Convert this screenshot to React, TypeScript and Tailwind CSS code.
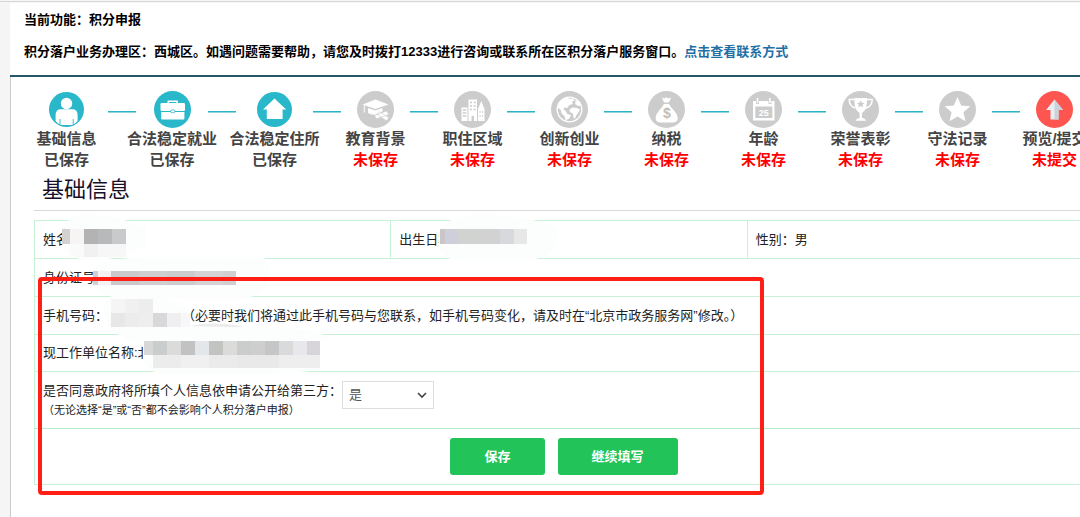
import React from "react";

type StepState = "done" | "todo" | "submit";
type Step = { label: string; status: string; state: StepState; width: string; icon: React.ReactNode };

const TEAL = "#29b8ca";
const GREY = "#cccccc";
const RED = "#ff5550";

const steps: Step[] = [
  {
    label: "基础信息",
    status: "已保存",
    state: "done",
    width: "w-[83px]",
    icon: (
      <>
        <circle cx="18.5" cy="12.5" r="5.7" fill="#fff" />
        <path d="M7.6 30V24q0-5.8 5.4-5.8h11.200q5.400 0 5.400 5.800v6q-2 2.400-5.200 4H12.800q-3.400-1.600-5.200-4z" fill="#fff" />
        <path d="M12 34v-6M25.200 34v-6" stroke={TEAL} strokeWidth=".9" fill="none" />
      </>
    ),
  },
  {
    label: "合法稳定就业",
    status: "已保存",
    state: "done",
    width: "w-[72px]",
    icon: (
      <>
        <path d="M14.300 12v-1.800h8.800V12" stroke="#fff" strokeWidth="1.500" fill="none" />
        <rect x="6.500" y="12" width="24.500" height="8" rx="1.200" fill="#fff" />
        <path d="M7.200 21h23.200v6.200q0 1.200-1.200 1.200H8.400q-1.200 0-1.200-1.200z" fill="#fff" />
        <ellipse cx="18.700" cy="20.300" rx="2.300" ry="1.500" fill="#fff" stroke={TEAL} strokeWidth=".8" />
      </>
    ),
  },
  {
    label: "合法稳定住所",
    status: "已保存",
    state: "done",
    width: "w-[77px]",
    icon: <path d="M18.500 7.500L30.200 18.500H26.600V28H10.800V18.500H7z" fill="#fff" />,
  },
  {
    label: "教育背景",
    status: "未保存",
    state: "todo",
    width: "w-[69px]",
    icon: (
      <>
        <path d="M5.500 13.500L18.500 8.500L31.500 13.500L18.500 18z" fill="#fff" />
        <path d="M11 17v5q2.500 2 7 1.800l7.500-3.600V17l-7 2.500z" fill="#fff" />
        <path d="M7.300 14v7.500" stroke="#fff" strokeWidth="1" />
        <path d="M17.500 24.500l12-4.500l2.300 3.500l-12.300 4.300zM22 20.500l10 6.200l-2.500 3l-9-6z" fill="#fff" stroke={GREY} strokeWidth=".6" />
      </>
    ),
  },
  {
    label: "职住区域",
    status: "未保存",
    state: "todo",
    width: "w-[69px]",
    icon: (
      <>
        <path d="M7.500 16.500h6V30h-6zM14.500 8.500h8.500V30h-8.500zM24 18l3.300-8l3.200 8v12H24z" fill="#fff" />
        <path d="M8.800 19h3.500M8.800 22h3.500M8.800 25h3.500M16 11.500h2M19.700 11.500h2M16 15h2M19.700 15h2M16 18.500h2M19.700 18.500h2M25.500 21h1.200M28 21h1.200M25.500 25h1.200M28 25h1.200" stroke={GREY} strokeWidth="1.500" />
        <path d="M17.500 25h2.500v5h-2.500z" fill={GREY} />
      </>
    ),
  },
  {
    label: "创新创业",
    status: "未保存",
    state: "todo",
    width: "w-[69px]",
    icon: (
      <>
        <circle cx="18.500" cy="18.500" r="12.300" fill={GREY} stroke="#fff" strokeWidth="1.300" />
        <path d="M9 11q3-4 8-4.800l1.500 1.800l3.500-.8l1.500 2l-2.500 1.800l1 2l-3.500 1l-2.500 3l-2.500-.5l-1 2l2 1.200l1.500 3l4 1.500l-1.500 3l-2.500 1.500l-1 2q-1-3.500-1.500-5.500l-3-3l-.5-3l-3-2.500q-.5-3 2-5.700z" fill="#fff" />
        <path d="M18.500 18.500l3-2l4.500.5l3 1.500l-1.500 3l-2 2.500l-1.500 3.500l-1.500-.5l-.5-4.500l-3-1.500zM24.500 9l3.500 2l1.800 4l-3-.3l-2.500-1.500z" fill="#fff" />
      </>
    ),
  },
  {
    label: "纳税",
    status: "未保存",
    state: "todo",
    width: "w-[69px]",
    icon: (
      <>
        <path d="M13.800 6.500l2.600.9l2-1.200l2.200 1.200l2.600-.9l-2.300 5.100h-4.800z" fill="#fff" />
        <path d="M16 13h5q1.500 3 5 6.500t3.800 7.200q0 4.800-5 4.800H12.600q-5 0-5-4.800q.3-3.700 3.600-7.200T16 13z" fill="#fff" />
        <text x="19" y="27" textAnchor="middle" fontSize="14" fontWeight="700" fill="#bdbdbd">$</text>
      </>
    ),
  },
  {
    label: "年龄",
    status: "未保存",
    state: "todo",
    width: "w-[69px]",
    icon: (
      <>
        <path d="M8 10h3v3h3v-3h9.500v3h3v-3h3v19.500H8zM10.300 15.500V27h17V15.500z" fill="#fff" fillRule="evenodd" />
        <path d="M12.500 7.500v4M25 7.500v4" stroke="#fff" strokeWidth="1.600" strokeLinecap="round" />
        <text x="18.800" y="24.500" textAnchor="middle" fontSize="9" fontWeight="700" fill="#fff">25</text>
      </>
    ),
  },
  {
    label: "荣誉表彰",
    status: "未保存",
    state: "todo",
    width: "w-[69px]",
    icon: (
      <>
        <path d="M12.300 7h12.800q.4 12-4.800 14.500l-.5 5.200q3.500.5 4.400 3H13.500q.9-2.500 4.300-3l-.5-5.200Q12 19 12.300 7z" fill="#fff" />
        <path d="M12.300 8.500H7.200q0 6.700 6.300 8.500M25 8.500h5.200q0 6.700-6.300 8.500" stroke="#fff" strokeWidth="1.500" fill="none" />
        <path d="M18.700 9.200l1.100 2.500l2.700.2l-2 1.800l.6 2.700l-2.400-1.400l-2.400 1.400l.6-2.700l-2-1.800l2.700-.2z" fill={GREY} />
      </>
    ),
  },
  {
    label: "守法记录",
    status: "未保存",
    state: "todo",
    width: "w-[69px]",
    icon: <path d="M18.500 6l3.700 8.400l9.100.9l-6.900 6l2.100 9l-8-4.800l-8 4.800l2.100-9l-6.900-6l9.100-.9z" fill="#fff" />,
  },
  {
    label: "预览/提交",
    status: "未提交",
    state: "submit",
    width: "w-[69px]",
    icon: (
      <>
        <path d="M18.500 8.500L27 19h-4.500v9.500h-8V19H10z" fill="#e9eef2" />
        <path d="M18.500 8.500L27 19h-4.500v9.500h-4z" fill="#c9d3dc" />
      </>
    ),
  },
];

const discColour: Record<StepState, string> = { done: TEAL, todo: GREY, submit: RED };

function StepItem({ step, first }: { step: Step; first: boolean }) {
  return (
    <>
      {!first && (
        <li aria-hidden="true" className="mt-5 h-0.5 w-7 shrink-0 border-t border-[#2ab4c5] bg-[#8fd6df]" />
      )}
      <li className={`flex shrink-0 flex-col items-center ${step.width}`}>
        <svg viewBox="0 0 37 37" className="size-[37px]" aria-hidden="true">
          <circle cx="18.500" cy="18.500" r={step.state === "done" && step.label !== "合法稳定就业" ? 17.500 : 18.500} fill={discColour[step.state]} />
          {step.icon}
        </svg>
        <span className="text-[15px] leading-[21px] font-bold whitespace-nowrap text-[#444]">{step.label}</span>
        <span
          className={`text-[15px] leading-[21px] font-bold whitespace-nowrap ${step.state === "done" ? "text-[#444]" : "text-[#ff0000]"}`}
        >
          {step.status}
        </span>
      </li>
    </>
  );
}

type Block = [x: number, y: number, w: number, h: number, fill: string];

const blocks: Block[] = [
  [62, 229, 8, 15, "#d3d1d2"], [70, 229, 14, 15, "#f6f5f3"], [84, 229, 28, 15, "#b3b3b4"], [98, 229, 14, 15, "#b8b9bb"], [112, 229, 14, 15, "#c9cacc"],
  [70, 244, 14, 13, "#fafafa"], [84, 244, 14, 13, "#f1f1f1"], [98, 244, 28, 13, "#f7f7f7"],
  [440, 229, 5, 15, "#c9c5c8"], [445, 229, 13, 15, "#cfcfdb"], [458, 229, 14, 15, "#d1d3d0"], [472, 229, 28, 15, "#d2d2d2"], [500, 229, 14, 15, "#d8d9dd"], [514, 229, 13, 15, "#e7e7e7"],
  [93, 271, 5, 14, "#d2cfd1"], [98, 271, 13, 14, "#f3f3f3"], [111, 271, 28, 14, "#cacaca"], [139, 271, 28, 14, "#cfcfcf"], [167, 271, 28, 14, "#cbcccd"], [195, 271, 28, 14, "#d4d4d4"], [223, 271, 13, 14, "#d2cfd0"],
  [111, 299, 14, 14, "#f5f5f5"], [125, 299, 14, 14, "#f0f0f0"], [139, 299, 14, 14, "#ededed"],
  [111, 313, 14, 14, "#e7e7e7"], [125, 313, 14, 14, "#ececec"], [139, 313, 14, 14, "#eeeeee"], [153, 313, 14, 14, "#d8d8da"], [167, 313, 14, 14, "#efefef"], [181, 313, 9, 14, "#f7f7f9"],
  [144, 341, 9, 14, "#d7d7d7"], [153, 341, 14, 14, "#cacdce"], [167, 341, 14, 14, "#dbdbda"], [181, 341, 14, 14, "#c3c2c2"], [195, 341, 14, 14, "#e4e7e9"], [209, 341, 14, 14, "#c2c4c2"],
  [223, 341, 14, 14, "#dbdbda"], [237, 341, 14, 14, "#cbcccc"], [251, 341, 14, 14, "#cfcecf"], [265, 341, 14, 14, "#c5c6c8"], [279, 341, 14, 14, "#dadada"], [293, 341, 14, 14, "#e8e8ec"], [307, 341, 13, 14, "#d7d5d9"],
  [153, 355, 28, 13, "#ececec"], [181, 355, 28, 13, "#f0f0f0"], [209, 355, 28, 13, "#ebebeb"], [237, 355, 42, 13, "#e9e9e9"], [279, 355, 41, 13, "#eeeeee"],
];

function Redactions() {
  return (
    <svg
      aria-hidden="true"
      viewBox="34 210 320 175"
      width="320"
      height="175"
      className="pointer-events-none absolute -top-2.5 left-0 overflow-visible"
    >
      <g fill="#fcfdfd">
        <path d="M62 231Q66 216 85 214Q120 216 146 228V244Q126 261 86 260Q66 258 62 244z" />
        <path d="M439 231Q446 216 478 215Q530 215 557 228V244Q550 262 510 261H458Q440 258 439 246z" />
        <path d="M94 268Q104 258 150 257H264L270 270Q268 297 240 299H117Q98 292 94 285z" />
        <path d="M103 308Q106 297 124 295Q158 297 176 303L190 310V325L244 328Q290 327 318 332L329 339L146 348Q104 334 103 308z" />
        <path d="M143 341H320V369Q300 374 240 374H160Q146 370 143 361z" />
      </g>
      {blocks.map(([x, y, w, h, fill], i) => (
        <rect key={i} x={x} y={y} width={w} height={h} fill={fill} shapeRendering="crispEdges" />
      ))}
      <path d="M190 326q24-5 54 .5l-8 .8z" fill="#ececec" />
    </svg>
  );
}

const cell = "h-[38px] border border-[#c8f2d6] px-2 py-0";
const button =
  "h-[37px] cursor-pointer rounded-[3px] bg-[#22c358] px-[34px] text-[13px] font-bold text-white hover:bg-[#1fb050]";

export default function App() {
  return (
    <div className="min-h-screen overflow-hidden bg-[#f5f5f5] font-['Liberation_Sans','Noto_Sans_CJK_SC',sans-serif] text-[13px] text-[#222]">
      <div className="h-[3px] border-y border-[#f5f5f5] bg-[#d8d8d8]" />
      <div className="ml-2.5 flex min-h-[calc(100vh-3px)] flex-col bg-white">
        <header className="border-b-2 border-[#24566a] px-3.5 pt-px pb-[7px] leading-8 font-bold text-black">
          <p>当前功能：积分申报</p>
          <p>
            积分落户业务办理区：西城区。如遇问题需要帮助，请您及时拨打12333进行咨询或联系所在区积分落户服务窗口。
            <a href="#contact" className="text-[#1f6fa5]">点击查看联系方式</a>
          </p>
        </header>

        <main className="grow border-l border-[#ccc] pt-3.5">
          <ol className="ml-3.5 flex items-start">
            {steps.map((step, i) => (
              <StepItem key={step.label} step={step} first={i === 0} />
            ))}
          </ol>

          <div className="-mr-6 ml-[23px]">
            <h1 className="mb-[9px] border-b border-[#d9d9d9] px-2 pt-[5px] pb-[5px] text-[22px] leading-[30px] text-[#181028]">基础信息</h1>

            <form className="relative" onSubmit={(e) => e.preventDefault()}>
              <table className="w-full table-fixed border-collapse">
                <tbody>
                  <tr>
                    <td className={cell}>姓名：</td>
                    <td className={cell}>出生日期：</td>
                    <td className={cell}>性别：男</td>
                  </tr>
                  <tr>
                    <td colSpan={3} className={cell}>身份证号：</td>
                  </tr>
                  <tr>
                    <td colSpan={3} className={cell}>
                      <div className="flex whitespace-nowrap">
                        <span className="w-[139px]">手机号码：</span>
                        <span>（必要时我们将通过此手机号码与您联系，如手机号码变化，请及时在“北京市政务服务网”修改。）</span>
                      </div>
                    </td>
                  </tr>
                  <tr>
                    <td colSpan={3} className="h-[37px] border border-[#c8f2d6] px-2 py-0">现工作单位名称:北</td>
                  </tr>
                  <tr>
                    <td colSpan={3} className="h-[57px] border border-[#c8f2d6] border-b-[#b5ecc9] px-2 py-0">
                      <div className="flex items-start">
                        <label htmlFor="consent" className="leading-5">
                          是否同意政府将所填个人信息依申请公开给第三方：
                          <small className="block text-[11px] leading-[18px]">（无论选择“是”或“否”都不会影响个人积分落户申报）</small>
                        </label>
                        <span className="relative">
                          <select
                            id="consent"
                            defaultValue="是"
                            className="h-7 w-[92px] appearance-none border border-[#ddd] bg-white pl-1.5 text-[13px] text-[#555]"
                          >
                            <option>是</option>
                            <option>否</option>
                          </select>
                          <svg viewBox="0 0 12 8" className="pointer-events-none absolute top-2.5 right-1.5 h-2 w-3" aria-hidden="true">
                            <path d="M2 2l4 4l4-4" fill="none" stroke="#444" strokeWidth="1.600" />
                          </svg>
                        </span>
                      </div>
                    </td>
                  </tr>
                  <tr>
                    <td colSpan={3} className="h-14 border border-[#c8f2d6] px-2 py-0">
                      <div className="flex justify-center gap-[13px] pr-2.5">
                        <button type="submit" className={button}>保存</button>
                        <button type="button" className={button}>继续填写</button>
                      </div>
                    </td>
                  </tr>
                </tbody>
              </table>
              <Redactions />
              <div className="pointer-events-none absolute top-[57px] left-1 h-[218px] w-[726px] rounded-[4px] border-4 border-[#ff1f14]" />
            </form>
          </div>
        </main>
      </div>
    </div>
  );
}
